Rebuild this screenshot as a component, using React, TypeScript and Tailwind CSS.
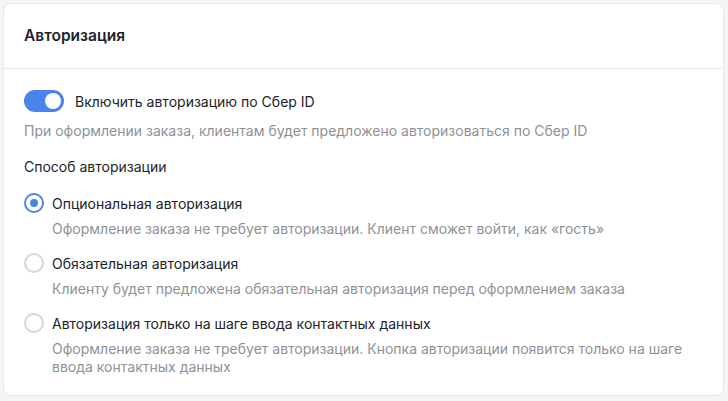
import { useState } from "react";

type Mode = "optional" | "required" | "contacts";

const options: { id: Mode; label: string; hint: string }[] = [
  {
    id: "optional",
    label: "Опциональная авторизация",
    hint: "Оформление заказа не требует авторизации. Клиент сможет войти, как «гость»",
  },
  {
    id: "required",
    label: "Обязательная авторизация",
    hint: "Клиенту будет предложена обязательная авторизация перед оформлением заказа",
  },
  {
    id: "contacts",
    label: "Авторизация только на шаге ввода контактных данных",
    hint: "Оформление заказа не требует авторизации. Кнопка авторизации появится только на шаге ввода контактных данных",
  },
];

function Radio({ checked }: { checked: boolean }) {
  return (
    <span
      className={`flex h-[20px] w-[20px] shrink-0 items-center justify-center rounded-full border-2 ${
        checked ? "border-[#4b83ec]" : "border-[#d4d6da]"
      }`}
    >
      {checked && <span className="h-[8px] w-[8px] rounded-full bg-[#4b83ec]" />}
    </span>
  );
}

export default function App() {
  const [enabled, setEnabled] = useState(true);
  const [mode, setMode] = useState<Mode>("optional");

  return (
    <div className="min-h-[401px] bg-[#f4f5f7] pt-[3px] pl-[3px] font-['Inter','Noto_Sans',sans-serif]">
      <div className="h-[393px] w-[721px] rounded-[8px] border border-[#e6e8eb] bg-white">
        {/* Header */}
        <div className="flex h-[65px] items-center border-b border-[#e6e8eb] px-[20px]">
          <h2 className="text-[15.5px] font-semibold text-[#1f2328]">Авторизация</h2>
        </div>

        <div className="px-[20px] pt-[21px] pb-[20px]">
          {/* Toggle */}
          <label className="flex h-[22px] cursor-pointer items-center gap-[11px]">
            <button
              type="button"
              onClick={() => setEnabled((v) => !v)}
              className={`relative h-[22px] w-[40px] shrink-0 rounded-full transition-colors ${
                enabled ? "bg-[#4b83ec]" : "bg-[#d4d6da]"
              }`}
            >
              <span
                className={`absolute top-[3px] h-[16px] w-[16px] rounded-full bg-white transition-all ${
                  enabled ? "left-[21px]" : "left-[3px]"
                }`}
              />
            </button>
            <span className="text-[14px] text-[#222428]">Включить авторизацию по Сбер ID</span>
          </label>
          <p className="mt-[9px] text-[14px] leading-[20px] text-[#8e9297]">
            При оформлении заказа, клиентам будет предложено авторизоваться по Сбер ID
          </p>

          <p className="mt-[16px] text-[14px] leading-[20px] text-[#222428]">Способ авторизации</p>

          <div className="mt-[16px] flex flex-col gap-[15px]">
            {options.map((o) => (
              <div key={o.id}>
                <button
                  type="button"
                  onClick={() => setMode(o.id)}
                  className="flex h-[20px] items-center gap-[8px] text-left"
                >
                  <Radio checked={mode === o.id} />
                  <span className="text-[14px] text-[#222428]">{o.label}</span>
                </button>
                <p className="mt-[7px] pl-[28px] text-[14px] leading-[18px] text-[#8e9297]">{o.hint}</p>
              </div>
            ))}
          </div>
        </div>
      </div>
    </div>
  );
}
